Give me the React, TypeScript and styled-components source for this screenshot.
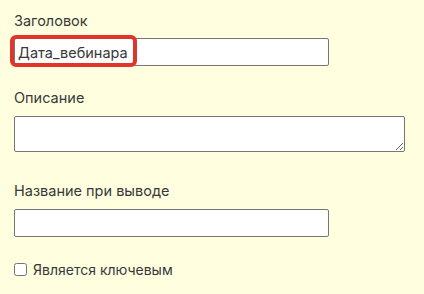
import React from 'react'
import styled, { createGlobalStyle } from 'styled-components'

const GlobalStyle = createGlobalStyle`
  html, body {
    margin: 0;
    padding: 0;
    background: #ffffe0;
  }
  body {
    font-family: Inter, "Open Sans", sans-serif;
    color: #383838;
  }
`

const Page = styled.form`
  padding: 12px 14px 0 14px;
  width: 424px;
  height: 294px;
  box-sizing: border-box;
`

const Field = styled.div<{ $gap: number }>`
  margin-bottom: ${p => p.$gap}px;
`

const Label = styled.label<{ $space?: number }>`
  display: block;
  font-size: 14.5px;
  line-height: 17px;
  margin-bottom: ${p => p.$space ?? 10}px;
`

const InputWrap = styled.div`
  position: relative;
  width: 315px;
`

const TextInput = styled.input`
  display: block;
  box-sizing: border-box;
  width: 315px;
  height: 28px;
  border: 1px solid #767676;
  border-radius: 2px;
  background: #fff;
  padding: 0 3px;
  font-family: Inter, "Open Sans", sans-serif;
  font-size: 14.5px;
  color: #383838;
  outline: none;
`

const TextArea = styled.textarea`
  display: block;
  box-sizing: border-box;
  width: 391px;
  height: 36px;
  border: 1px solid #767676;
  border-radius: 2px;
  background: #fff;
  font-family: Inter, "Open Sans", sans-serif;
  font-size: 14px;
`

const Highlight = styled.span`
  position: absolute;
  left: -4px;
  top: -3px;
  width: 127px;
  height: 32px;
  box-sizing: border-box;
  border: 4px solid #e0352b;
  border-radius: 6px;
  pointer-events: none;
`

const CheckRow = styled.label`
  display: flex;
  align-items: center;
  gap: 6px;
  font-size: 14px;
  line-height: 17px;
`

const Check = styled.input`
  margin: 0;
  width: 13px;
  height: 13px;
`

export default function App() {
  return (
    <>
      <GlobalStyle />
      <Page>
        <Field $gap={23}>
          <Label $space={9}>Заголовок</Label>
          <InputWrap>
            <TextInput defaultValue="Дата_вебинара" />
            <Highlight />
          </InputWrap>
        </Field>
        <Field $gap={30}>
          <Label>Описание</Label>
          <TextArea />
        </Field>
        <Field $gap={24}>
          <Label>Название при выводе</Label>
          <TextInput />
        </Field>
        <CheckRow>
          <Check type="checkbox" />
          Является ключевым
        </CheckRow>
      </Page>
    </>
  )
}
